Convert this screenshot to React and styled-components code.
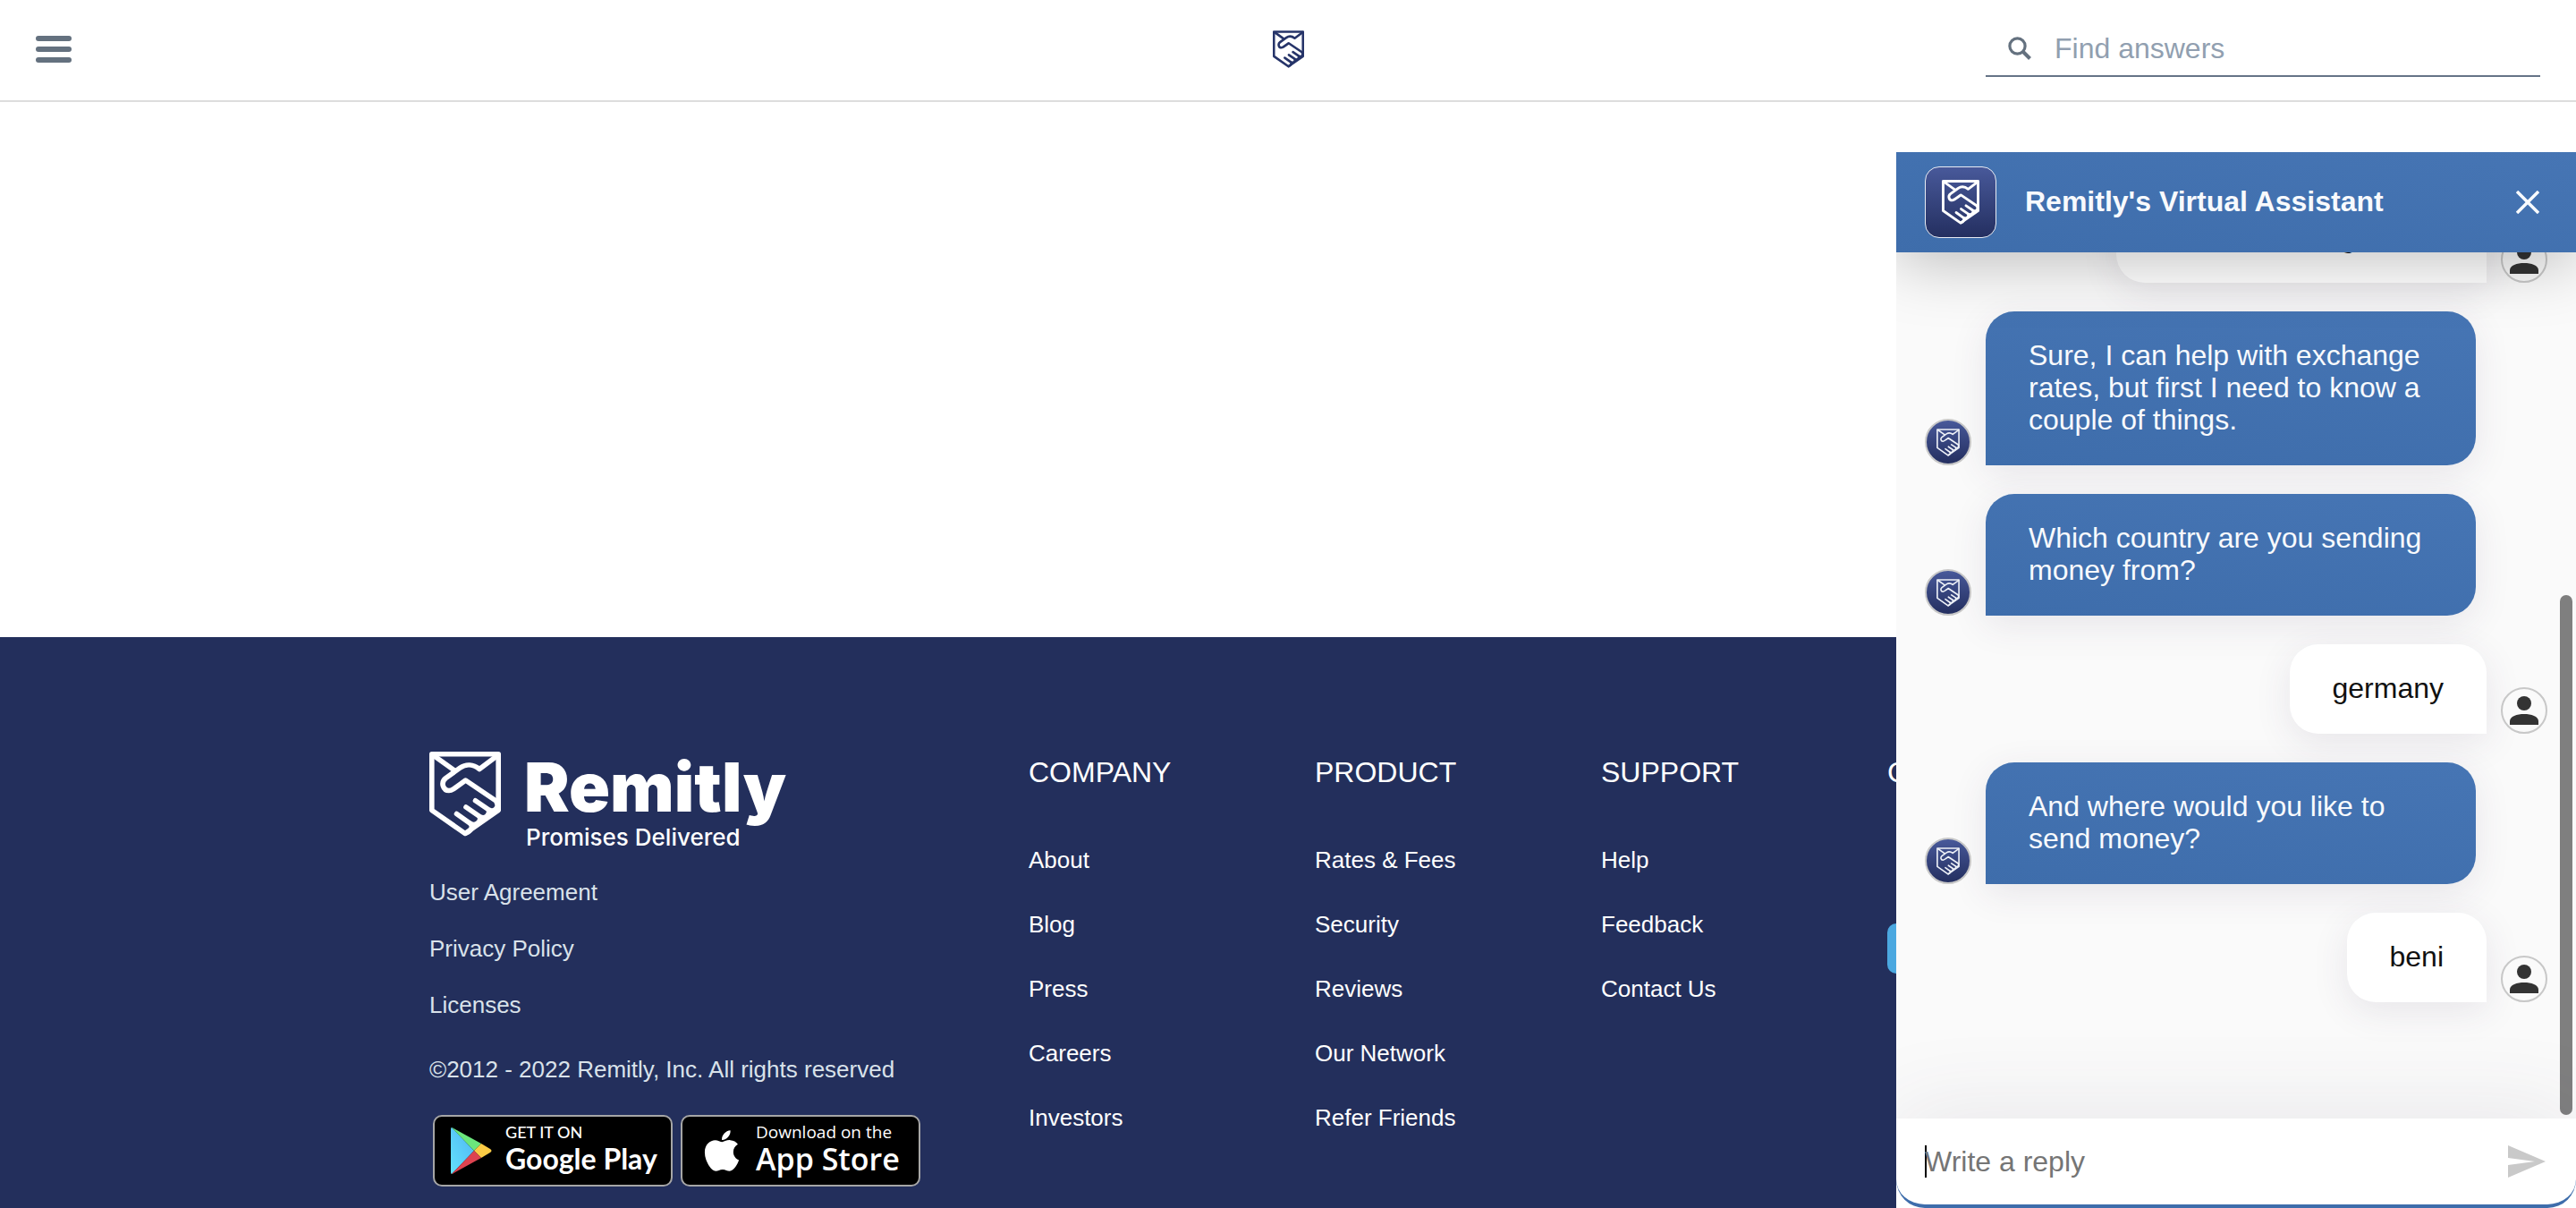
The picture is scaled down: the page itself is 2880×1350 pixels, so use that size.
import React from "react";
import styled, { createGlobalStyle } from "styled-components";
import { FaApple } from "react-icons/fa";

const GlobalStyle = createGlobalStyle`
  *, *::before, *::after { box-sizing: border-box; }
  body {
    margin: 0;
    background: #fff;
    font-family: "Liberation Sans", Arial, Helvetica, sans-serif;
  }
  h2, p, ul { margin: 0; padding: 0; font-weight: 400; }
  ul { list-style: none; }
  a { color: inherit; text-decoration: none; }
  button { border: 0; padding: 0; background: none; font: inherit; cursor: pointer; }
`;

const Page = styled.div`
  display: flex;
  flex-direction: column;
  min-height: 100vh;
`;

const TopBar = styled.header`
  display: grid;
  grid-template-columns: 1fr auto 1fr;
  align-items: center;
  height: 114px;
  padding: 0 40px 2px;
  border-bottom: 2px solid #ddd;
`;

const MenuButton = styled.button`
  display: flex;
  flex-direction: column;
  gap: 6px;
  width: 40px;
`;

const MenuLine = styled.span`
  height: 6px;
  border-radius: 3px;
  background: #64717f;
`;

const HomeLink = styled.a`
  display: flex;
  color: #263469;
`;

const SearchField = styled.label`
  display: flex;
  align-items: center;
  justify-self: end;
  gap: 26px;
  width: 620px;
  height: 62px;
  padding-left: 25px;
  border-bottom: 2px solid #667487;
  color: #64717f;
`;

const SearchInput = styled.input`
  flex: 1;
  min-width: 0;
  padding: 0;
  border: 0;
  outline: 0;
  background: transparent;
  font: inherit;
  font-size: 32px;
  line-height: 36px;
  color: #44505e;
  &::placeholder { color: #919fb0; opacity: 1; }
`;

const Main = styled.main`
  min-height: 598px;
`;

const Footer = styled.footer`
  flex: 1;
  padding: 128px 0 24px;
  background: #232f5c;
  color: #fff;
  font-size: 26px;
  line-height: 30px;
`;

const FooterGrid = styled.div`
  display: grid;
  grid-template-columns: 670px repeat(4, 1fr);
  max-width: 1980px;
  margin: 0 auto;
  padding-left: 30px;
`;

const Brand = styled.a`
  display: flex;
  gap: 26px;
  height: 110px;
`;

const BrandText = styled.span`
  display: flex;
  flex-direction: column;
`;

const Wordmark = styled.span`
  font-family: Inter, sans-serif;
  font-size: 76px;
  line-height: 78px;
  font-weight: 900;
`;

const Tagline = styled.span`
  padding-left: 2px;
  font-family: Inter, sans-serif;
  font-size: 26px;
  line-height: 36px;
  font-weight: 500;
`;

const LegalList = styled.ul`
  display: flex;
  flex-direction: column;
  gap: 33px;
  margin-top: 32px;
  color: #d9e2ea;
`;

const Copyright = styled.p`
  margin-top: 42px;
  color: #d9e2ea;
`;

const Badges = styled.div`
  display: flex;
  gap: 9px;
  margin-top: 36px;
  padding-left: 4px;
`;

const Badge = styled.a`
  display: flex;
  align-items: center;
  gap: ${(p) => p.$gap}px;
  width: 268px;
  height: 80px;
  padding-left: 18px;
  border: 2px solid #a6a6a6;
  border-radius: 10px;
  background: #000;
  font-family: ${(p) => p.$font}, sans-serif;
`;

const BadgeText = styled.span`
  display: flex;
  flex-direction: column;
  padding-bottom: 4px;
`;

const BadgeSmall = styled.span`
  font-size: ${(p) => p.$size}px;
  line-height: 22px;
  font-weight: 500;
`;

const BadgeLarge = styled.span`
  font-size: ${(p) => p.$size}px;
  line-height: 38px;
  font-weight: ${(p) => p.$weight};
`;

const ColumnTitle = styled.h2`
  font-size: 32px;
  line-height: 46px;
`;

const LinkList = styled.ul`
  display: flex;
  flex-direction: column;
  gap: 42px;
  margin-top: 60px;
`;

const LikeLink = styled.a`
  display: block;
  width: 160px;
  height: 56px;
  margin-top: 146px;
  border-radius: 10px;
  background: #4ba8e0;
`;

const Chat = styled.aside`
  position: fixed;
  top: 170px;
  right: 0;
  bottom: 0;
  display: flex;
  flex-direction: column;
  width: 760px;
  background: #fafafa;
  overflow: hidden;
  font-size: 32px;
  line-height: 36px;
`;

const ChatHeader = styled.div`
  position: relative;
  z-index: 1;
  display: flex;
  align-items: center;
  flex: none;
  height: 112px;
  padding: 0 41px 0 32px;
  background: linear-gradient(188deg, #4675b4, #3e6dab);
  box-shadow: 0 10px 70px rgba(0, 0, 0, 0.25);
  color: #f8fafd;
`;

const ChatLogo = styled.span`
  display: flex;
  align-items: center;
  justify-content: center;
  width: 80px;
  height: 80px;
  border: 1px solid #e8ecf4;
  border-radius: 16px;
  background: linear-gradient(#48599a, #242f60);
  color: #fff;
`;

const ChatTitle = styled.h2`
  flex: 1;
  margin-left: 32px;
  padding-bottom: 2px;
  font-size: 32px;
  font-weight: 700;
`;

const CloseButton = styled.button`
  display: flex;
  color: inherit;
`;

const MessageArea = styled.div`
  position: relative;
  display: flex;
  flex: 1;
  flex-direction: column;
  justify-content: flex-end;
  gap: 32px;
  min-height: 0;
  padding: 0 32px 130px;
`;

const MessageRow = styled.div`
  display: flex;
  align-items: flex-end;
  gap: 16px;
  flex-direction: ${(p) => (p.$mine ? "row-reverse" : "row")};
`;

const Bubble = styled.p`
  max-width: 548px;
  padding: 31px 48px 33px;
  border-radius: ${(p) => (p.$mine ? "32px 32px 0 32px" : "32px 32px 32px 0")};
  background: ${(p) => (p.$mine ? "#fff" : "linear-gradient(188deg, #4675b4, #3e6dab)")};
  color: ${(p) => (p.$mine ? "#111" : "#f8fafd")};
  box-shadow: 0 10px 40px rgba(64, 50, 85, 0.1);
`;

const Avatar = styled.span`
  display: flex;
  flex: none;
  align-items: center;
  justify-content: center;
  width: 52px;
  height: 52px;
  border: 2px solid #c8c8c8;
  border-radius: 50%;
  background: ${(p) => (p.$mine ? "#fafafa" : "linear-gradient(#48599a, #242f60)")};
  color: ${(p) => (p.$mine ? "#333" : "#eef1f8")};
`;

const ScrollThumb = styled.div`
  position: absolute;
  right: 4px;
  bottom: 4px;
  width: 14px;
  height: 60%;
  border-radius: 7px;
  background: #7f7f7f;
`;

const Composer = styled.form`
  position: relative;
  flex: none;
  background: #fff;
  box-shadow: 0 -5px 100px rgba(64, 62, 85, 0.1);
`;

const ComposerInner = styled.div`
  display: flex;
  align-items: center;
  height: 100px;
  padding: 0 34px 0 32px;
  border-bottom: 4px solid #3e6dab;
  border-radius: 0 0 32px 32px;
`;

const ReplyInput = styled.input`
  flex: 1;
  min-width: 0;
  height: 36px;
  padding: 0;
  border: 0;
  outline: 0;
  background: linear-gradient(#000, #000) left center / 2px 36px no-repeat;
  font: inherit;
  color: #111;
  &::placeholder { color: #757575; opacity: 1; }
`;

const SendButton = styled.button`
  display: flex;
  color: #c9c9c9;
`;

function Handshake({ width, stroke = 5.6 }) {
  return (
    <svg width={width} height={Math.round((width * 95) / 80)} viewBox="0 0 80 95" fill="none" stroke="currentColor" strokeWidth={stroke} strokeLinecap="round" strokeLinejoin="round" aria-hidden="true">
      <path d="M2.8 2.8H77.2V65.5L40 91.5L2.8 65.5Z" />
      <path d="M5 4.5L29.5 22" strokeLinecap="butt" />
      <path d="M76 4.5L56 19.5C49 14 41 13.500 34.500 18L18.500 29.500C12 34.500 15.500 43.500 22 43.500C25 43.500 27 42 40.500 32L76 56" />
      <path d="M51.500 54.800L66.500 65C72.500 68.500 78 62 75.500 57.500" />
      <path d="M41 62L57 73C62 75.500 68 71 66.500 65.500" />
      <path d="M30.500 69.500L46 80.500C51 83.500 58 79 56.500 73.500" />
      <path d="M46 80.500C48.500 83 48 88 41 91" />
    </svg>
  );
}

function SearchIcon() {
  return (
    <svg width="26" height="26" viewBox="0 0 26 26" fill="none" stroke="currentColor" strokeWidth="3.200" aria-hidden="true">
      <circle cx="10.500" cy="10.500" r="8.600" />
      <path d="M16.500 16.500L24.500 24.500" strokeWidth="4" />
    </svg>
  );
}

function PersonIcon() {
  return (
    <svg width="32" height="32" viewBox="0 0 32 32" fill="currentColor" aria-hidden="true">
      <circle cx="16" cy="8" r="8" />
      <path d="M0 32V28C0 22.500 8 20 16 20S32 22.500 32 28V32Z" />
    </svg>
  );
}

function PlayIcon() {
  return (
    <svg width="46" height="52" viewBox="0 0 46 52" aria-hidden="true">
      <defs>
        <linearGradient id="playBlue" x1="0" y1="1" x2="1" y2="0">
          <stop offset="0" stopColor="#63e2fb" />
          <stop offset="1" stopColor="#4fb4f4" />
        </linearGradient>
      </defs>
      <path d="M0 2Q0 0 1 0L26 26L1 52Q0 52 0 50Z" fill="url(#playBlue)" />
      <path d="M1 0Q2 0 4 1.500L34 18L26 26Z" fill="#6be67c" />
      <path d="M34 18L44 24Q47 26 44 28L34 34L26 26Z" fill="#fbcb45" />
      <path d="M26 26L34 34L4 50.500Q2 52 1 52Z" fill="#dd4350" />
    </svg>
  );
}

const columns = [
  { title: "COMPANY", links: ["About", "Blog", "Press", "Careers", "Investors"] },
  { title: "PRODUCT", links: ["Rates & Fees", "Security", "Reviews", "Our Network", "Refer Friends"] },
  { title: "SUPPORT", links: ["Help", "Feedback", "Contact Us"] },
];

const messages = [
  { mine: true, text: "Check exchange rates" },
  { text: "Sure, I can help with exchange rates, but first I need to know a couple of things." },
  { text: "Which country are you sending money from?" },
  { mine: true, text: "germany" },
  { text: "And where would you like to send money?" },
  { mine: true, text: "beni" },
];

export default function App() {
  return (
    <>
      <GlobalStyle />
      <Page>
        <TopBar>
          <MenuButton aria-label="Menu">
            <MenuLine />
            <MenuLine />
            <MenuLine />
          </MenuButton>
          <HomeLink href="#" aria-label="Home">
            <Handshake width={35} stroke={6} />
          </HomeLink>
          <SearchField>
            <SearchIcon />
            <SearchInput type="text" placeholder="Find answers" aria-label="Find answers" />
          </SearchField>
        </TopBar>
        <Main />
        <Footer>
          <FooterGrid>
            <div>
              <Brand href="#">
                <Handshake width={80} />
                <BrandText>
                  <Wordmark>Remitly</Wordmark>
                  <Tagline>Promises Delivered</Tagline>
                </BrandText>
              </Brand>
              <LegalList>
                {["User Agreement", "Privacy Policy", "Licenses"].map((t) => (
                  <li key={t}><a href="#">{t}</a></li>
                ))}
              </LegalList>
              <Copyright>©2012 - 2022 Remitly, Inc. All rights reserved</Copyright>
              <Badges>
                <Badge href="#" $font="Lato" $gap={15}>
                  <PlayIcon />
                  <BadgeText>
                    <BadgeSmall $size={18}>GET IT ON</BadgeSmall>
                    <BadgeLarge $size={32} $weight={700}>Google Play</BadgeLarge>
                  </BadgeText>
                </Badge>
                <Badge href="#" $font="'Open Sans'" $gap={12}>
                  <FaApple size={52} aria-hidden="true" />
                  <BadgeText>
                    <BadgeSmall $size={19}>Download on the</BadgeSmall>
                    <BadgeLarge $size={34} $weight={600}>App Store</BadgeLarge>
                  </BadgeText>
                </Badge>
              </Badges>
            </div>
            {columns.map((c) => (
              <nav key={c.title} aria-label={c.title}>
                <ColumnTitle>{c.title}</ColumnTitle>
                <LinkList>
                  {c.links.map((l) => (
                    <li key={l}><a href="#">{l}</a></li>
                  ))}
                </LinkList>
              </nav>
            ))}
            <div>
              <ColumnTitle>CONNECT</ColumnTitle>
              <LikeLink href="#" aria-label="Like" />
            </div>
          </FooterGrid>
        </Footer>
      </Page>
      <Chat aria-label="Remitly's Virtual Assistant">
        <ChatHeader>
          <ChatLogo><Handshake width={42} stroke={5.5} /></ChatLogo>
          <ChatTitle>Remitly's Virtual Assistant</ChatTitle>
          <CloseButton aria-label="Close">
            <svg width="26" height="26" viewBox="0 0 26 26" fill="none" stroke="currentColor" strokeWidth="3.5" aria-hidden="true">
              <path d="M1 1L25 25M25 1L1 25" />
            </svg>
          </CloseButton>
        </ChatHeader>
        <MessageArea>
          {messages.map((m) => (
            <MessageRow key={m.text} $mine={m.mine}>
              <Avatar $mine={m.mine}>{m.mine ? <PersonIcon /> : <Handshake width={26} stroke={5} />}</Avatar>
              <Bubble $mine={m.mine}>{m.text}</Bubble>
            </MessageRow>
          ))}
          <ScrollThumb />
        </MessageArea>
        <Composer>
          <ComposerInner>
            <ReplyInput type="text" placeholder="Write a reply" aria-label="Write a reply" />
            <SendButton type="button" aria-label="Send">
              <svg width="42" height="36" viewBox="0 0 42 36" fill="currentColor" aria-hidden="true">
                <path d="M0 36L42 18L0 0V14L30 18L0 22Z" />
              </svg>
            </SendButton>
          </ComposerInner>
        </Composer>
      </Chat>
    </>
  );
}
